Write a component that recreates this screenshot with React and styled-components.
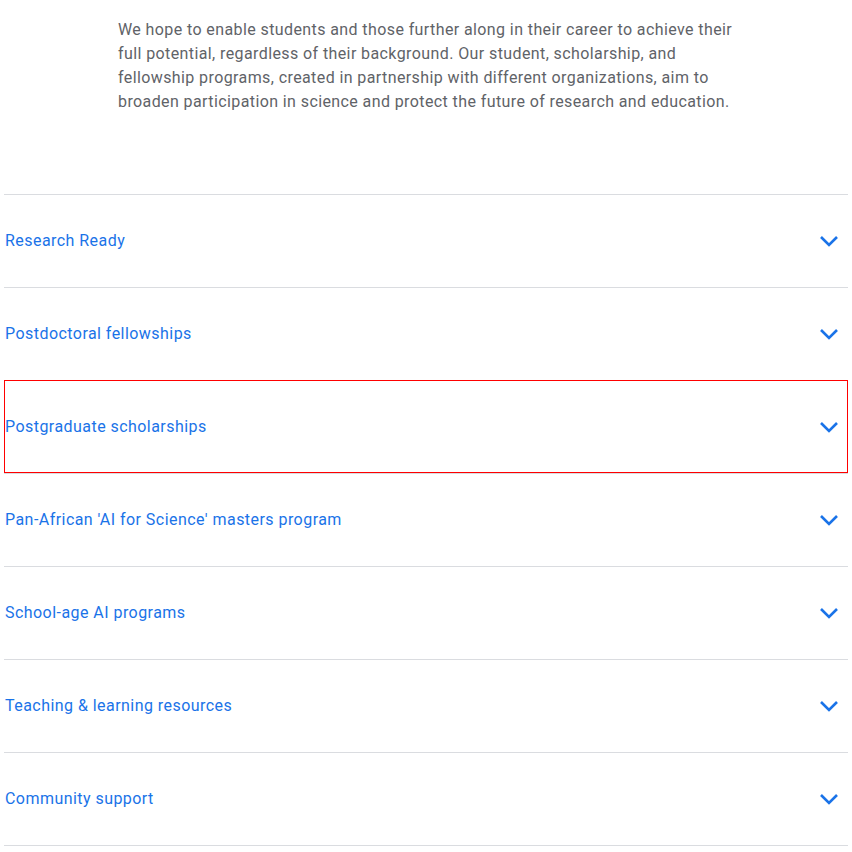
import styled, { createGlobalStyle } from 'styled-components'

const GlobalStyle = createGlobalStyle`
  body {
    margin: 0;
    background: #fff;
    font-family: Roboto, "Noto Sans", Arial, sans-serif;
  }
`

const Page = styled.div`
  padding: 18px 4px 0 4px;
`

const Intro = styled.p`
  margin: 0 0 80px 114px;
  max-width: 622px;
  font-size: 16px;
  line-height: 24px;
  letter-spacing: 0.4px;
  color: #5f6368;
`

const List = styled.div`
  display: flex;
  flex-direction: column;
`

const Item = styled.div`
  display: flex;
  align-items: center;
  justify-content: space-between;
  height: 92px;
  padding: 0 9px 0 1px;
  border-top: 1px solid #dadce0;
  outline: ${p => (p.$active ? '1px solid #ff0000' : 'none')};
  outline-offset: -1px;
  cursor: pointer;
  &:last-child {
    border-bottom: 1px solid #dadce0;
  }
`

const ItemTitle = styled.span`
  font-size: 16px;
  line-height: 24px;
  letter-spacing: 0.45px;
  color: #1a73e8;
`

const Chevron = () => (
  <svg width="20" height="12" viewBox="0 0 20 12" fill="none">
    <path d="M2 2 L10 10 L18 2" stroke="#1a73e8" strokeWidth="2.6" />
  </svg>
)

const items = [
  'Research Ready',
  'Postdoctoral fellowships',
  'Postgraduate scholarships',
  "Pan-African 'AI for Science' masters program",
  'School-age AI programs',
  'Teaching & learning resources',
  'Community support',
]

export default function App() {
  return (
    <Page>
      <GlobalStyle />
      <Intro>
        We hope to enable students and those further along in their career to achieve their
        full potential, regardless of their background. Our student, scholarship, and
        fellowship programs, created in partnership with different organizations, aim to
        broaden participation in science and protect the future of research and education.
      </Intro>
      <List>
        {items.map((t, i) => (
          <Item key={t} $active={i === 2}>
            <ItemTitle>{t}</ItemTitle>
            <Chevron />
          </Item>
        ))}
      </List>
    </Page>
  )
}
